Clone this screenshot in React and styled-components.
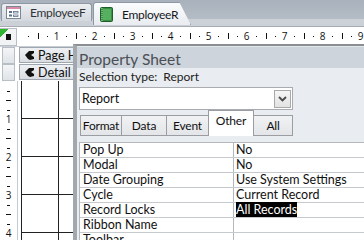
import React from "react"
import styled, { createGlobalStyle } from "styled-components"

const GlobalStyle = createGlobalStyle`
    html, body {
        margin: 0;
        padding: 0;
        background: #ffffff;
    }
    body {
        font-family: Lato, "Open Sans", sans-serif;
    }
    svg {
        flex: none;
        display: block;
    }
`

const INCH = 38

const properties = [
    { label: "Pop Up", value: "No" },
    { label: "Modal", value: "No" },
    { label: "Date Grouping", value: "Use System Settings" },
    { label: "Cycle", value: "Current Record" },
    { label: "Record Locks", value: "All Records", selected: true },
    { label: "Ribbon Name", value: "" },
    { label: "Toolbar", value: "" },
]

const sheetTabs = [
    { name: "Format", width: 42 },
    { name: "Data", width: 46 },
    { name: "Event", width: 43 },
    { name: "Other", width: 46, active: true },
    { name: "All", width: 40 },
]

function FormIcon() {
    return (
        <svg width="15" height="13" viewBox="0 0 15 13">
            <rect x="0.5" y="0.5" width="14" height="12" fill="#ffffff" stroke="#7d8794" />
            <rect x="1" y="1" width="13" height="2" fill="#d98aa6" />
            <rect x="3" y="5" width="3" height="2" fill="#5b6f8c" />
            <rect x="7.5" y="5.5" width="4.5" height="1.5" fill="none" stroke="#5b6f8c" strokeWidth="0.8" />
            <rect x="3" y="8.5" width="3" height="2" fill="#5b6f8c" />
            <rect x="7.5" y="9" width="4.5" height="1.5" fill="none" stroke="#5b6f8c" strokeWidth="0.8" />
        </svg>
    )
}

function ReportIcon() {
    return (
        <svg width="13" height="15" viewBox="0 0 13 15">
            <rect x="0.5" y="0.5" width="12" height="14" rx="1" fill="#3a8f45" stroke="#1f5e2a" />
            <rect x="3" y="2" width="8" height="11" fill="#55b060" />
            <line x1="2" y1="1" x2="2" y2="14" stroke="#b5dcb5" strokeDasharray="1 1" />
        </svg>
    )
}

function SectionGlyph() {
    return (
        <svg width="9" height="9" viewBox="0 0 9 9">
            <polygon points="0,4 4,0 9,0 9,2 6,4 9,6 9,8 5,9 3,8" fill="#111" />
        </svg>
    )
}

function HorizontalRuler() {
    const marks = []
    for (let q = 1; q <= 40; q++) {
        const x = 0.5 + q * (INCH / 4)
        if (q % 4 === 0) {
            marks.push(<text key={q} x={x} y="13" fontSize="10" textAnchor="middle"
                fontFamily="Open Sans, sans-serif" fill="#111">{q / 4}</text>)
        } else if (q % 2 === 0) {
            marks.push(<rect key={q} x={Math.round(x)} y="6" width="1" height="6" fill="#111" />)
        } else {
            marks.push(<rect key={q} x={Math.round(x)} y="9" width="1" height="1" fill="#111" />)
        }
    }
    return <svg width="346" height="19">{marks}</svg>
}

function VerticalRuler() {
    const marks = []
    for (let q = 1; q <= 20; q++) {
        const y = q * (INCH / 4)
        if (q % 4 === 0) {
            marks.push(<text key={q} x="8.5" y={y + 3.5} fontSize="10" textAnchor="middle"
                fontFamily="Open Sans, sans-serif" fill="#111">{q / 4}</text>)
        } else if (q % 2 === 0) {
            marks.push(<rect key={q} x="6" y={Math.round(y)} width="5" height="1" fill="#111" />)
        } else {
            marks.push(<rect key={q} x="7" y={Math.round(y)} width="3" height="1" fill="#111" />)
        }
    }
    return <svg width="17" height="200">{marks}</svg>
}

function ChevronDown() {
    return (
        <svg width="9" height="6" viewBox="0 0 9 6">
            <path d="M1 1 L4.5 4.5 L8 1" fill="none" stroke="#4a4a4a" strokeWidth="1.8" />
        </svg>
    )
}

export default function App() {
    return (
        <Screen>
            <GlobalStyle />
            <TabStrip>
                <DocTab>
                    <FormIcon />
                    <TabLabel>EmployeeF</TabLabel>
                </DocTab>
                <DocTab active>
                    <ReportIcon />
                    <TabLabel active>EmployeeR</TabLabel>
                </DocTab>
            </TabStrip>
            <RulerRow>
                <Corner>
                    <CornerSquare />
                </Corner>
                <HorizontalRuler />
            </RulerRow>
            <Workspace>
                <DesignPane>
                    <TopEdge />
                    <SectionRow>
                        <SelectorBox />
                        <SectionBar>
                            <SectionGlyph />
                            <span>Page Header</span>
                        </SectionBar>
                    </SectionRow>
                    <SectionRow>
                        <SelectorBox />
                        <SectionBar>
                            <SectionGlyph />
                            <span>Detail</span>
                        </SectionBar>
                    </SectionRow>
                    <DetailBody>
                        <RulerColumn>
                            <VerticalRuler />
                        </RulerColumn>
                        <Canvas />
                    </DetailBody>
                </DesignPane>
                <PropertySheet>
                    <SheetHeader>Property Sheet</SheetHeader>
                    <SheetBody>
                        <SelectionType>Selection type:&nbsp; Report</SelectionType>
                        <Dropdown>
                            <DropdownValue>Report</DropdownValue>
                            <DropdownButton>
                                <ChevronDown />
                            </DropdownButton>
                        </Dropdown>
                        <SheetTabs>
                            {sheetTabs.map(t => (
                                <SheetTab key={t.name} active={t.active} $w={t.width}>{t.name}</SheetTab>
                            ))}
                        </SheetTabs>
                        <PropTable>
                            {properties.map(p => (
                                <PropRow key={p.label}>
                                    <PropLabel>{p.label}</PropLabel>
                                    <PropValue>
                                        {p.selected ? <Selected>{p.value}</Selected> : p.value}
                                    </PropValue>
                                </PropRow>
                            ))}
                        </PropTable>
                    </SheetBody>
                </PropertySheet>
            </Workspace>
        </Screen>
    )
}

const Screen = styled.div`
    width: 364px;
    height: 240px;
    overflow: hidden;
    display: flex;
    flex-direction: column;
    background: #ffffff;
`
const TabStrip = styled.div`
    height: 27px;
    flex: none;
    display: flex;
    align-items: flex-end;
    gap: 1px;
    box-sizing: border-box;
    padding: 0 0 1px 1px;
    background: linear-gradient(#a9b2bc, #b4bcc5 74%, #ccd1d7 75%, #ccd1d7);
    border-bottom: 1px solid #a7adb4;
`
const DocTab = styled.div`
    display: flex;
    align-items: center;
    gap: 9px;
    box-sizing: border-box;
    padding: 0 0 0 ${p => p.active ? "6px" : "4px"};
    width: ${p => p.active ? "98px" : "91px"};
    height: ${p => p.active ? "23px" : "18px"};
    margin-bottom: ${p => p.active ? "0" : "4px"};
    background: ${p => p.active
        ? "linear-gradient(#fbfcfd, #e9ecf0)"
        : "linear-gradient(#eceef1, #d4d9df)"};
    border: 1px solid #8e98a4;
    border-bottom: none;
    border-radius: 3px ${p => p.active ? "10px" : "3px"} 0 0;
    clip-path: ${p => p.active ? "polygon(0 0, 88% 0, 100% 100%, 0 100%)" : "none"};
`
const TabLabel = styled.span`
    font-size: 12px;
    letter-spacing: -0.3px;
    color: ${p => p.active ? "#15181c" : "#2f3338"};
    white-space: nowrap;
`
const RulerRow = styled.div`
    height: 20px;
    flex: none;
    box-sizing: border-box;
    display: flex;
    align-items: center;
    background: #ffffff;
    border-bottom: 1px solid #c9ced4;
`
const Corner = styled.div`
    width: 17px;
    height: 18px;
    flex: none;
    margin-right: 1px;
    display: flex;
    align-items: center;
    justify-content: center;
    background: linear-gradient(135deg, #2fb52f 0 6px, #f2f3f5 6px);
    border: 1px solid #b9bfc6;
    border-left: none;
    box-sizing: border-box;
`
const CornerSquare = styled.div`
    width: 5px;
    height: 6px;
    background: #111;
`
const Workspace = styled.div`
    flex: 1;
    display: flex;
    min-height: 0;
`
const DesignPane = styled.div`
    width: 73px;
    flex: none;
    display: flex;
    flex-direction: column;
    background: #ffffff;
`
const TopEdge = styled.div`
    height: 3px;
    background: #d6dade;
`
const SectionRow = styled.div`
    display: flex;
    height: 17px;
    gap: 4px;
`
const SelectorBox = styled.div`
    width: 13px;
    margin-left: 2px;
    box-sizing: border-box;
    background: linear-gradient(#f4f5f7, #dfe3e7);
    border: 1px solid #b8bec5;
`
const SectionBar = styled.div`
    flex: 1;
    display: flex;
    align-items: center;
    gap: 4px;
    padding-left: 5px;
    font-size: 12.5px;
    color: #111;
    white-space: nowrap;
    overflow: hidden;
    background: linear-gradient(#eef0f3, #d9dde2);
    border: 1px solid #9ea6b0;
    border-right: none;
    margin-bottom: 1px;
`
const DetailBody = styled.div`
    flex: 1;
    display: flex;
    gap: 3px;
`
const RulerColumn = styled.div`
    width: 17px;
    flex: none;
    border-right: 1px solid #c4c9cf;
    overflow: hidden;
`
const Canvas = styled.div`
    flex: 1;
    border-left: 1px solid #222;
    background-color: #ffffff;
    background-image:
        linear-gradient(to right, #222 1px, transparent 1px),
        linear-gradient(to bottom, #222 1px, transparent 1px);
    background-size: ${INCH}px ${INCH}px;
    background-position: 36px 37px;
`
const PropertySheet = styled.div`
    flex: 1;
    margin-top: -3px;
    display: flex;
    flex-direction: column;
    border-top: 2px solid #8b8f94;
    border-left: 4px solid #a3a8ae;
    background: #e9ecf0;
    min-width: 0;
`
const SheetHeader = styled.div`
    height: 25px;
    padding: 3px 0 0 2px;
    box-sizing: border-box;
    display: flex;
    align-items: center;
    font-size: 15.5px;
    color: #4b4f55;
    background: #cdd4dc;
    border-top: 1px solid #e4e7ea;
`
const SheetBody = styled.div`
    display: flex;
    flex-direction: column;
    padding-left: 2px;
`
const SelectionType = styled.div`
    font-size: 12px;
    color: #222;
    height: 15px;
    line-height: 15px;
    margin-top: 1px;
    white-space: nowrap;
`
const Dropdown = styled.div`
    margin-top: 3px;
    width: 214px;
    height: 23px;
    box-sizing: border-box;
    display: flex;
    align-items: center;
    justify-content: space-between;
    background: #ffffff;
    border: 1px solid #a8acb1;
    padding: 0 1px 0 2px;
`
const DropdownValue = styled.span`
    font-size: 12.5px;
    color: #111;
`
const DropdownButton = styled.div`
    width: 17px;
    height: 18px;
    box-sizing: border-box;
    display: flex;
    align-items: center;
    justify-content: center;
    background: linear-gradient(#f6f6f6, #e2e2e2);
    border: 1px solid #a9a9a9;
`
const SheetTabs = styled.div`
    height: 26px;
    display: flex;
    align-items: flex-end;
    padding-left: 2px;
`
const SheetTab = styled.div`
    width: ${p => p.$w}px;
    height: ${p => p.active ? "26px" : "21px"};
    box-sizing: border-box;
    padding-top: 2px;
    text-align: center;
    font-size: 12px;
    letter-spacing: -0.2px;
    color: #111;
    white-space: nowrap;
    background: ${p => p.active ? "#ffffff" : "linear-gradient(#f1f2f4, #e3e5e8)"};
    border: 1px solid #9a9da1;
    border-bottom: ${p => p.active ? "none" : "1px solid #9a9da1"};
    margin-left: -1px;
    position: relative;
    z-index: ${p => p.active ? 1 : 0};
`
const PropTable = styled.div`
    margin-top: 6px;
    display: flex;
    flex-direction: column;
    border-top: 1px solid #b4b8bd;
    border-left: 1px solid #b4b8bd;
    background: #ffffff;
`
const PropRow = styled.div`
    height: 15px;
    box-sizing: border-box;
    display: grid;
    grid-template-columns: 154px 1fr;
    border-bottom: 1px solid #c6c9cd;
`
const PropLabel = styled.div`
    font-size: 12.5px;
    line-height: 14px;
    color: #111;
    padding-left: 3px;
    border-right: 1px solid #b4b8bd;
    white-space: nowrap;
`
const PropValue = styled.div`
    font-size: 12.5px;
    line-height: 14px;
    color: #111;
    padding-left: 2px;
    white-space: nowrap;
`
const Selected = styled.span`
    background: #000;
    color: #fff;
`
